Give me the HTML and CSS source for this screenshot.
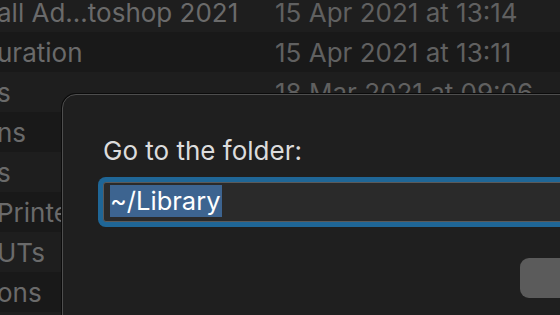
FILE: index.html
```html
<!DOCTYPE html>
<html>
<head>
<meta charset="utf-8">
<link rel="stylesheet" href="styles.css">
</head>
<body>
<div class="list">
  <div class="row odd"><span class="name">all Ad...toshop 2021</span><span class="date">15 Apr 2021 at 13:14</span></div>
  <div class="row even"><span class="name">uration</span><span class="date">15 Apr 2021 at 13:11</span></div>
  <div class="row odd"><span class="name">s</span><span class="date">18 Mar 2021 at 09:06</span></div>
  <div class="row even"><span class="name">ns</span><span class="date"></span></div>
  <div class="row odd"><span class="name">s</span><span class="date"></span></div>
  <div class="row even"><span class="name">Printe</span><span class="date"></span></div>
  <div class="row odd"><span class="name">UTs</span><span class="date"></span></div>
  <div class="row even"><span class="name">ons</span><span class="date"></span></div>
</div>
<div class="dialog">
  <div class="title">Go to the folder:</div>
  <div class="field"><span class="sel">~/Library</span></div>
  <div class="actions"><div class="btn"></div></div>
</div>
</body>
</html>
```
FILE: styles.css
```css
html, body {
  margin: 0;
  padding: 0;
  width: 560px;
  height: 315px;
  overflow: hidden;
  background: #1e1e1e;
  font-family: Inter, "Noto Sans", sans-serif;
}
.list {
  margin-top: -8px;
  display: flex;
  flex-direction: column;
}
.row {
  height: 40px;
  display: flex;
  align-items: center;
  font-size: 26px;
  color: #6a6a6a;
  white-space: nowrap;
}
.row.odd { background: #1e1e1e; }
.row.even { background: #191919; }
.name {
  width: 278px;
  margin-left: -3px;
  flex: none;
}
.date { color: #606060; }
.dialog {
  position: absolute;
  left: 62px;
  top: 94px;
  width: 620px;
  height: 300px;
  box-sizing: border-box;
  background: #1f1f1f;
  border: 1px solid #4e4e4e;
  box-shadow: 0 0 0 1px #0b0b0b;
  border-radius: 14px;
  padding: 40px 0 0 40px;
}
.title {
  font-size: 26px;
  line-height: 32px;
  color: #dcdcdc;
}
.field {
  margin: 15px 0 0 0;
  height: 40px;
  box-sizing: border-box;
  background: #2a2a2a;
  border: 1px solid #5a5a5a;
  border-radius: 3px;
  box-shadow: 0 0 0 5px #1f6696;
  padding: 2px 0 0 6px;
}
.sel {
  display: inline-block;
  background: #3d6490;
  color: #fff;
  font-size: 25.5px;
  line-height: 32px;
  padding-right: 1px;
}
.actions {
  display: flex;
  margin-top: 36px;
  padding-left: 417px;
}
.btn {
  width: 120px;
  height: 40px;
  border-radius: 9px;
  background: #5b5b5b;
}
```
